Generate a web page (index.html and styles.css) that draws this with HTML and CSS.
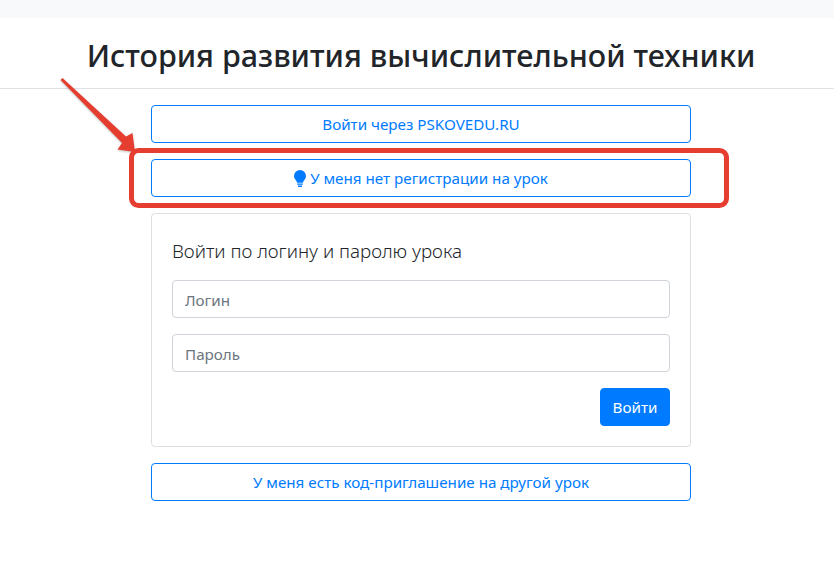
FILE: index.html
```html
<!DOCTYPE html>
<html lang="ru">
<head>
    <meta charset="UTF-8">
    <title>История развития вычислительной техники</title>
    <link rel="stylesheet" href="styles.css">
</head>
<body>
    <div class="topbar"></div>
    <header class="lesson-header">
        <h1>История развития вычислительной техники</h1>
    </header>

    <main class="login-box">
        <a class="btn btn-outline" href="#">Войти через PSKOVEDU.RU</a>
        <a class="btn btn-outline" href="#">
            <svg class="bulb" viewBox="0 0 12 17" width="12" height="17">
                <path fill="#007bff" d="M6 0a6 6 0 0 0-6 6c0 1.700.8 3 1.700 4.100.7.9 1.100 1.700 1.300 2.600h6c.2-.9.6-1.700 1.300-2.600C11.200 9 12 7.700 12 6a6 6 0 0 0-6-6zM3.200 13.500h5.600v1.300H3.200zM4 15.400h4V17H4z"/>
            </svg>
            У меня нет регистрации на урок
        </a>

        <!-- Вход по логину и паролю -->
        <form class="card">
            <h5>Войти по логину и паролю урока</h5>
            <input class="field" type="text" placeholder="Логин">
            <input class="field" type="password" placeholder="Пароль">
            <div class="card-actions">
                <button class="btn-primary" type="button">Войти</button>
            </div>
        </form>

        <a class="btn btn-outline" href="#">У меня есть код-приглашение на другой урок</a>
    </main>

    <!-- Пометки поверх скриншота -->
    <svg class="markup" width="834" height="580" viewBox="0 0 834 580">
        <polygon class="arrow" points="60.500,80 62.500,78 126,136.500 132.500,133 135,152 117.500,149.500 122,143"/>
        <rect x="131.500" y="150.500" width="595" height="55" rx="7" fill="none" stroke="#e53e30" stroke-width="5"/>
    </svg>
</body>
</html>
```

FILE: styles.css
```css
* {
    box-sizing: border-box;
}

body {
    margin: 0;
    height: 580px;
    overflow: hidden;
    position: relative;
    background-color: #fff;
    color: #212529;
    font-family: "Noto Sans", "Open Sans", sans-serif;
    font-size: 16px;
    line-height: 24px;
}

.topbar {
    height: 18px;
    background-color: #f8f9fa;
}

.lesson-header {
    height: 71px;
    padding-left: 8px;
    border-bottom: 1px solid #dee2e6;
    text-align: center;
}

h1 {
    margin: 0;
    padding-top: 18px;
    font-size: 30.500px;
    line-height: 38px;
    font-weight: 500;
}

.login-box {
    width: 540px;
    margin: 16px 0 0 151px;
    display: flex;
    flex-direction: column;
    gap: 16px;
}

.btn {
    display: flex;
    align-items: center;
    justify-content: center;
    gap: 4px;
    height: 38px;
    border-radius: 4px;
    font-size: 15.200px;
    text-decoration: none;
}

.btn-outline {
    border: 1px solid #007bff;
    color: #007bff;
}

.bulb {
    flex: none;
}

.card {
    height: 234px;
    padding: 20px;
    border: 1px solid rgba(0, 0, 0, 0.125);
    border-radius: 4px;
    display: flex;
    flex-direction: column;
}

h5 {
    margin: 0 0 16px;
    padding-top: 4px;
    font-size: 18.800px;
    line-height: 26px;
    font-weight: 300;
    color: #212529;
}

.field {
    width: 100%;
    height: 38px;
    flex: none;
    margin-bottom: 16px;
    padding: 7px 12px 5px;
    border: 1px solid #ced4da;
    border-radius: 4px;
    font-family: inherit;
    font-size: 15.200px;
}

.field::placeholder {
    color: #6c757d;
}

.card-actions {
    display: flex;
    justify-content: flex-end;
}

.btn-primary {
    width: 70px;
    height: 38px;
    border: 1px solid #007bff;
    border-radius: 4px;
    background-color: #007bff;
    color: #fff;
    font-family: inherit;
    font-size: 15.200px;
}

.markup {
    position: absolute;
    top: 0;
    left: 0;
    pointer-events: none;
}

.arrow {
    fill: #e53e30;
    filter: drop-shadow(0 1px 1px rgba(0, 0, 0, 0.25));
}
```
